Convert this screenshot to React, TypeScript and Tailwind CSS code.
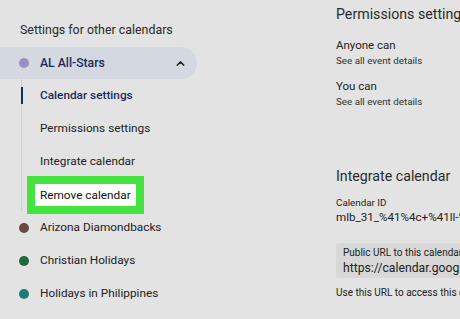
import React from 'react';
import { ChevronUp } from 'lucide-react';

interface CalendarRow {
  name: string;
  color: string;
}

const otherCalendars: CalendarRow[] = [
  { name: 'Arizona Diamondbacks', color: 'bg-[#6b4a42]' },
  { name: 'Christian Holidays', color: 'bg-[#1f6b3f]' },
  { name: 'Holidays in Philippines', color: 'bg-[#1d7b78]' },
];

export default function App() {
  return (
    <div
      className="flex h-[319px] w-[460px] overflow-hidden bg-[#e3e3e3] text-[#222]"
      style={{ fontFamily: 'Roboto, "Noto Sans", sans-serif' }}
    >
      {/* left nav */}
      <div className="w-[336px] shrink-0 pt-[20px]">
        <div className="h-[20px] pl-[20px] text-[12.4px] leading-[20px] text-[#2a2a2a]">
          Settings for other calendars
        </div>

        <div className="mt-[7px] flex h-[32px] w-[197px] items-center rounded-r-full bg-[#d4d8e0] pl-[19px] pr-[10px]">
          <span className="h-[10px] w-[10px] rounded-full bg-[#9a8fc4]" />
          <span className="ml-[11px] flex-1 text-[12.2px] font-medium text-[#1b2a5c]">AL All-Stars</span>
          <ChevronUp size={13} strokeWidth={2.75} className="text-[#2a2a2a]" />
        </div>

        <div className="ml-[21px] w-[140px] border-l border-[#cfcfcf]">
          <div className="relative flex h-[33px] items-center pl-[18px] text-[11.8px] font-medium text-[#1b2a5c]">
            <span className="absolute left-[-1px] top-[8px] h-[17px] w-[2px] bg-[#1b2a5c]" />
            Calendar settings
          </div>
          <div className="flex h-[33px] items-center pl-[18px] text-[11.8px]">Permissions settings</div>
          <div className="flex h-[33px] items-center pl-[18px] text-[11.8px]">Integrate calendar</div>
          <div className="flex h-[33px] items-center pl-[13px] text-[11.8px]">
            <span className="bg-white px-[5px] leading-[22px] text-[#111] outline-[8px] outline-solid outline-[#44e33f]">
              Remove calendar
            </span>
          </div>
        </div>

        {otherCalendars.map((c) => (
          <div key={c.name} className="flex h-[33px] items-center pl-[19px]">
            <span className={`h-[10px] w-[10px] rounded-full ${c.color}`} />
            <span className="ml-[11px] text-[11.8px]">{c.name}</span>
          </div>
        ))}
      </div>

      {/* right settings */}
      <div className="min-w-0 flex-1 whitespace-nowrap">
        <div className="h-[28px] text-[14.2px] leading-[28px] text-[#2b2b2b]">Permissions settings</div>
        <div className="mt-[8px] h-[18px] text-[11.5px] leading-[18px]">Anyone can</div>
        <div className="h-[14px] text-[9.8px] leading-[14px] text-[#333]">See all event details</div>
        <div className="mt-[9px] h-[18px] text-[11.5px] leading-[18px]">You can</div>
        <div className="h-[14px] text-[9.8px] leading-[14px] text-[#333]">See all event details</div>

        <div className="mt-[53px] h-[28px] text-[14.2px] leading-[28px] text-[#2b2b2b]">Integrate calendar</div>
        <div className="mt-[6px] h-[14px] text-[9.8px] leading-[14px]">Calendar ID</div>
        <div className="h-[14px] text-[11.6px] leading-[14px]">mlb_31_%41%4c+%41ll-%53tars</div>

        <div className="mt-[19px] h-[35px] w-[200px] rounded-l-[3px] bg-[#d8d8d8] pl-[7px] pt-[3px]">
          <div className="h-[14px] text-[10px] leading-[14px]">Public URL to this calendar</div>
          <div className="h-[16px] text-[12.2px] leading-[16px]">https://calendar.google.com</div>
        </div>
        <div className="mt-[8px] h-[14px] text-[10px] leading-[14px]">Use this URL to access this calendar</div>
      </div>
    </div>
  );
}
